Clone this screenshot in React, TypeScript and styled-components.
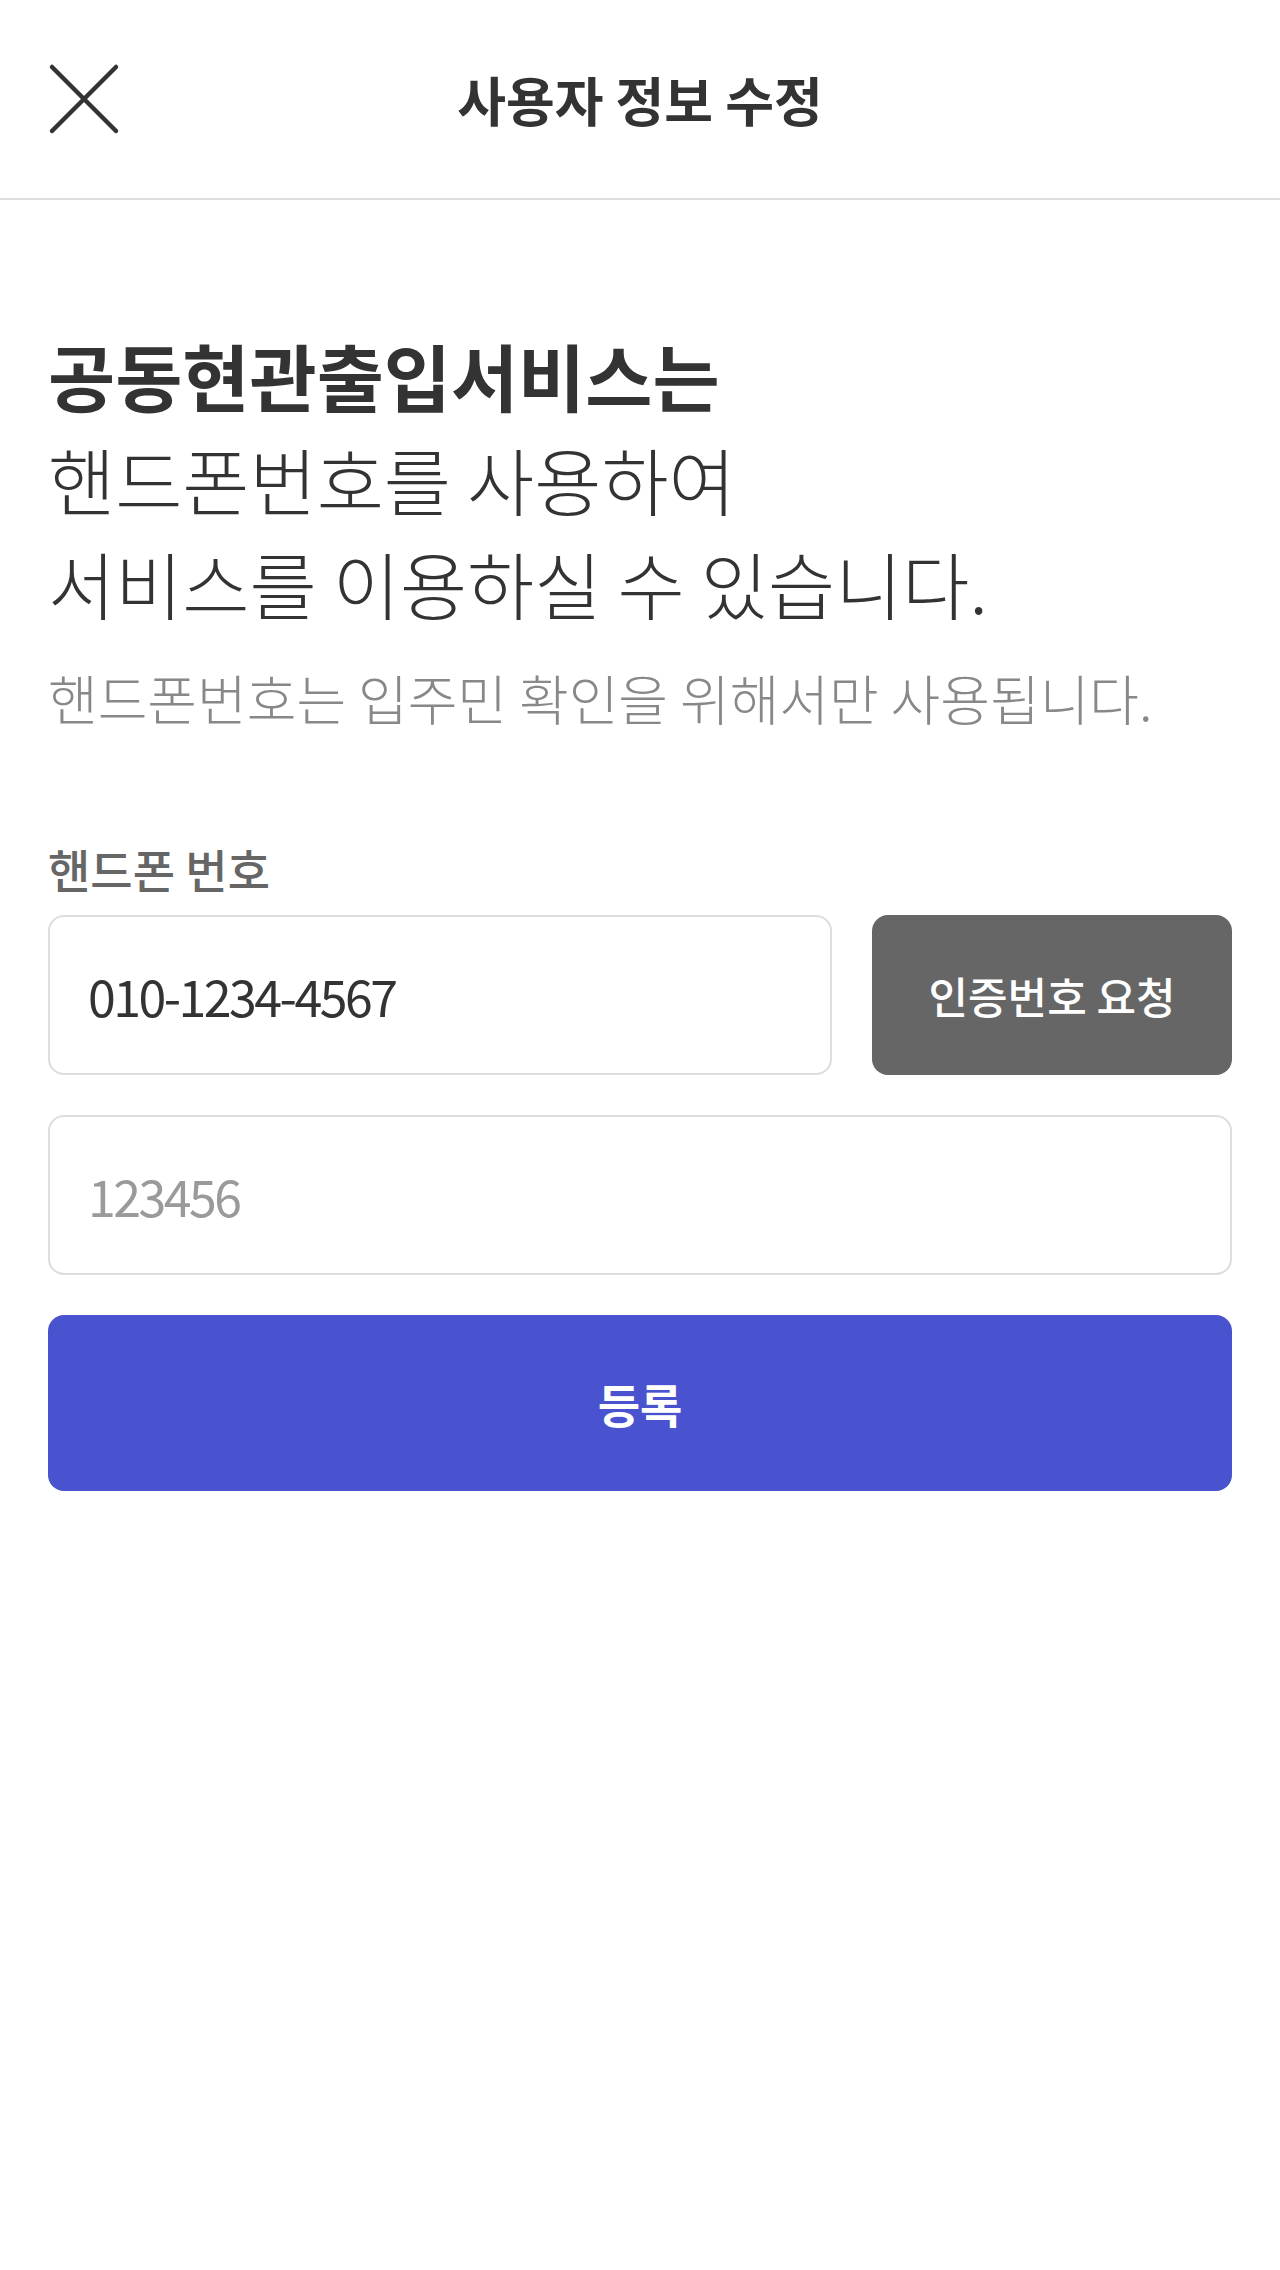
import { createGlobalStyle } from 'styled-components'
import styled from 'styled-components'

const FONT = `'Noto Sans CJK KR', 'Noto Sans', sans-serif`

const GlobalStyle = createGlobalStyle`
  html, body {
    margin: 0;
    padding: 0;
    background: #fff;
  }
  body {
    font-family: ${FONT};
    color: #333;
  }
  * {
    box-sizing: border-box;
  }
`

const Page = styled.div`
  width: 1280px;
  min-height: 2270px;
  background: #fff;
`

const Header = styled.header`
  display: grid;
  grid-template-columns: 1fr auto 1fr;
  align-items: center;
  height: 200px;
  padding: 0 48px;
  border-bottom: 2px solid #dddddd;
`

const CloseButton = styled.button`
  justify-self: start;
  display: flex;
  width: 72px;
  height: 72px;
  padding: 0;
  border: 0;
  background: none;
  cursor: pointer;
`

const Title = styled.h1`
  margin: 0;
  font-size: 53px;
  font-weight: 700;
  color: #333;
`

const Main = styled.main`
  padding: 0 48px;
`

const Intro = styled.section`
  padding-top: 122px;
`

const Headline = styled.p<{ $bold?: boolean }>`
  margin: 0;
  font-size: 73px;
  line-height: 104px;
  font-weight: ${p => (p.$bold ? 700 : 300)};
  color: #333;
`

const Note = styled.p`
  margin: 28px 0 0;
  font-size: 54px;
  line-height: 72px;
  font-weight: 300;
  color: #888;
`

const Form = styled.form`
  display: flex;
  flex-direction: column;
  gap: 40px;
  margin-top: 104px;
`

const Label = styled.label`
  display: block;
  margin-bottom: -23px;
  font-size: 46px;
  line-height: 60px;
  font-weight: 500;
  color: #666;
`

const Row = styled.div`
  display: flex;
  gap: 40px;
`

const Input = styled.input<{ $grow?: boolean }>`
  flex: ${p => (p.$grow ? '1 1 0' : 'none')};
  min-width: 0;
  width: ${p => (p.$grow ? 'auto' : '100%')};
  height: 160px;
  padding: 0 38px;
  border: 2px solid #dddddd;
  border-radius: 16px;
  font-family: ${FONT};
  font-size: 50px;
  font-weight: 400;
  letter-spacing: -2.5px;
  color: #333;
  outline: none;
  background: #fff;

  &::placeholder {
    color: #9a9a9a;
  }
`

const Button = styled.button<{ $primary?: boolean }>`
  height: ${p => (p.$primary ? 176 : 160)}px;
  width: ${p => (p.$primary ? '100%' : '360px')};
  flex-shrink: 0;
  border: 0;
  border-radius: 16px;
  background: ${p => (p.$primary ? '#4a53cf' : '#666666')};
  color: #fff;
  font-family: ${FONT};
  font-size: ${p => (p.$primary ? 46 : 43)}px;
  font-weight: ${p => (p.$primary ? 700 : 500)};
  cursor: pointer;
`

function CloseIcon() {
  return (
    <svg width="72" height="72" viewBox="0 0 72 72" fill="none">
      <path
        d="M4 4 L68 68 M68 4 L4 68"
        stroke="#333"
        strokeWidth="4.5"
        strokeLinecap="round"
      />
    </svg>
  )
}

export default function App() {
  return (
    <Page>
      <GlobalStyle />
      <Header>
        <CloseButton type="button" aria-label="닫기">
          <CloseIcon />
        </CloseButton>
        <Title>사용자 정보 수정</Title>
        <span />
      </Header>
      <Main>
        <Intro>
          <Headline $bold>공동현관출입서비스는</Headline>
          <Headline>핸드폰번호를 사용하여</Headline>
          <Headline>서비스를 이용하실 수 있습니다.</Headline>
          <Note>핸드폰번호는 입주민 확인을 위해서만 사용됩니다.</Note>
        </Intro>
        <Form onSubmit={e => e.preventDefault()}>
          <Label htmlFor="phone">핸드폰 번호</Label>
          <Row>
            <Input $grow id="phone" defaultValue="010-1234-4567" />
            <Button type="button">인증번호 요청</Button>
          </Row>
          <Input placeholder="123456" />
          <Button $primary type="submit">
            등록
          </Button>
        </Form>
      </Main>
    </Page>
  )
}
